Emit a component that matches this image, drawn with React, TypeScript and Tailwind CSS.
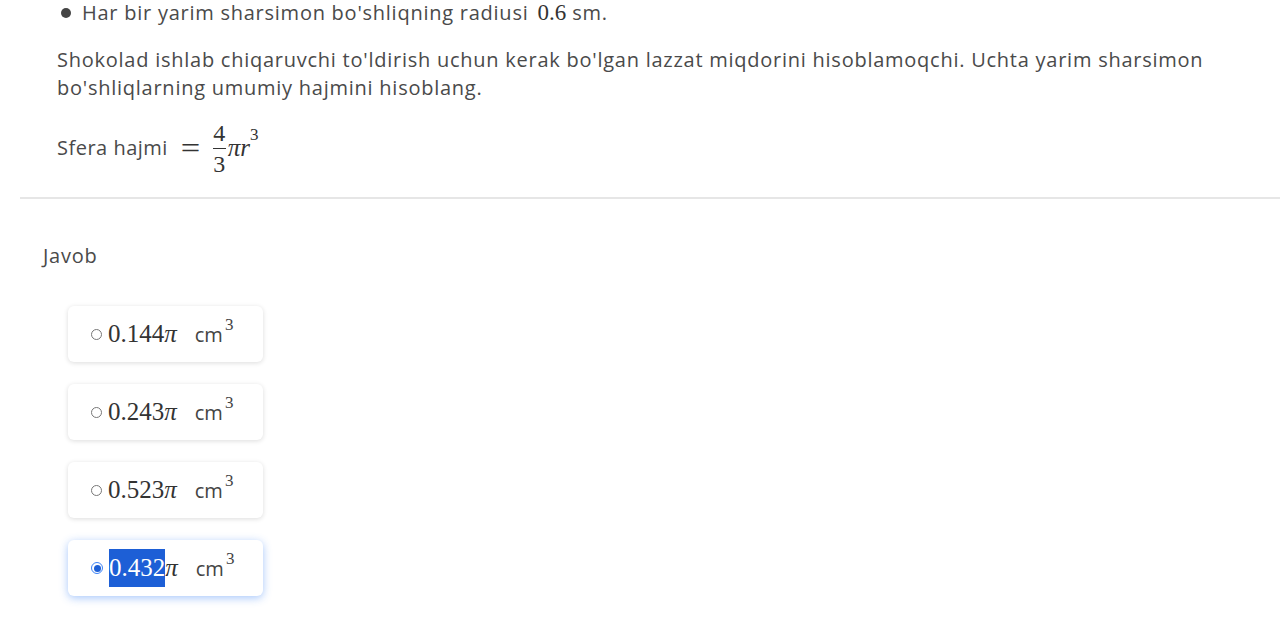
import React from "react";

const sans = { fontFamily: "'Open Sans', 'Noto Sans', sans-serif" };
const serif = { fontFamily: "'Liberation Serif', 'DejaVu Serif', serif" };

function Option({ value, selected }: { value: string; selected?: boolean }) {
  return (
    <div
      className={`w-[195px] h-[56px] rounded-md bg-white flex items-center pl-[23px] ${
        selected
          ? "shadow-[0_2px_9px_rgba(59,130,246,0.45)]"
          : "shadow-[0_1px_5px_rgba(0,0,0,0.14)]"
      }`}
    >
      {selected ? (
        <span className="w-[12px] h-[12px] rounded-full border border-[#3b82f6] flex items-center justify-center">
          <span className="w-[7px] h-[7px] rounded-full bg-[#1d5fd6]" />
        </span>
      ) : (
        <span className="w-[11px] h-[11px] rounded-full border border-[#777]" />
      )}
      <span className="ml-[6px] text-[25px] text-[#333] flex items-baseline" style={serif}>
        <span className={selected ? "bg-[#1d5fd6] text-white" : ""}>{value}</span>
        <span className="italic">π</span>
      </span>
      <span className="ml-[18px] text-[20px] text-[#444] relative top-[1px] flex items-start" style={sans}>
        cm<span className="text-[17px] relative -top-[8px] ml-[2px]" style={serif}>3</span>
      </span>
    </div>
  );
}

export default function App() {
  return (
    <div className="w-[1280px] h-[630px] bg-white overflow-hidden relative text-[#4a4a4a]" style={sans}>
      <div className="pl-[57px] pt-0">
        <div className="flex items-center h-[26px]">
          <span className="w-[10px] h-[10px] rounded-full bg-[#444] ml-[4px] mr-[11px]" />
          <span className="text-[20px] leading-[26px] tracking-[0.75px] whitespace-nowrap">
            Har bir yarim sharsimon bo'shliqning radiusi{" "}
            <span className="text-[23px] text-[#333] ml-[3px] tracking-normal" style={serif}>0.6</span>{" "}
            sm.
          </span>
        </div>
        <p className="mt-[20px] text-[20px] tracking-[0.75px] leading-[28px] w-[1180px]">
          Shokolad ishlab chiqaruvchi to'ldirish uchun kerak bo'lgan lazzat miqdorini hisoblamoqchi. Uchta yarim sharsimon bo'shliqlarning umumiy hajmini hisoblang.
        </p>
        <div className="mt-[12px] flex items-center h-[68px]">
          <span className="text-[20px] tracking-[0.5px]">Sfera hajmi</span>
          <span className="ml-[14px] flex items-center text-[24px] text-[#333]" style={serif}>
            <span className="text-[30px] leading-none scale-x-[1.15]">=</span>
            <span className="ml-[14px] flex flex-col items-center leading-none">
              <span className="text-[24px]">4</span>
              <span className="w-[13px] h-[1px] bg-[#333] my-[3px]" />
              <span className="text-[24px]">3</span>
            </span>
            <span className="italic ml-[2px] text-[25px]">πr</span>
            <span className="text-[17px] -top-[13px] relative">3</span>
          </span>
        </div>
      </div>
      <div className="ml-[20px] mt-[15px] h-[2px] bg-[#e6e6e6]" />
      <div className="pl-[43px] mt-[42px] text-[20px] tracking-[0.75px] text-[#4a4a4a]">Javob</div>
      <div className="pl-[68px] mt-[35px] flex flex-col gap-[22px]">
        <Option value="0.144" />
        <Option value="0.243" />
        <Option value="0.523" />
        <Option value="0.432" selected />
      </div>
    </div>
  );
}
